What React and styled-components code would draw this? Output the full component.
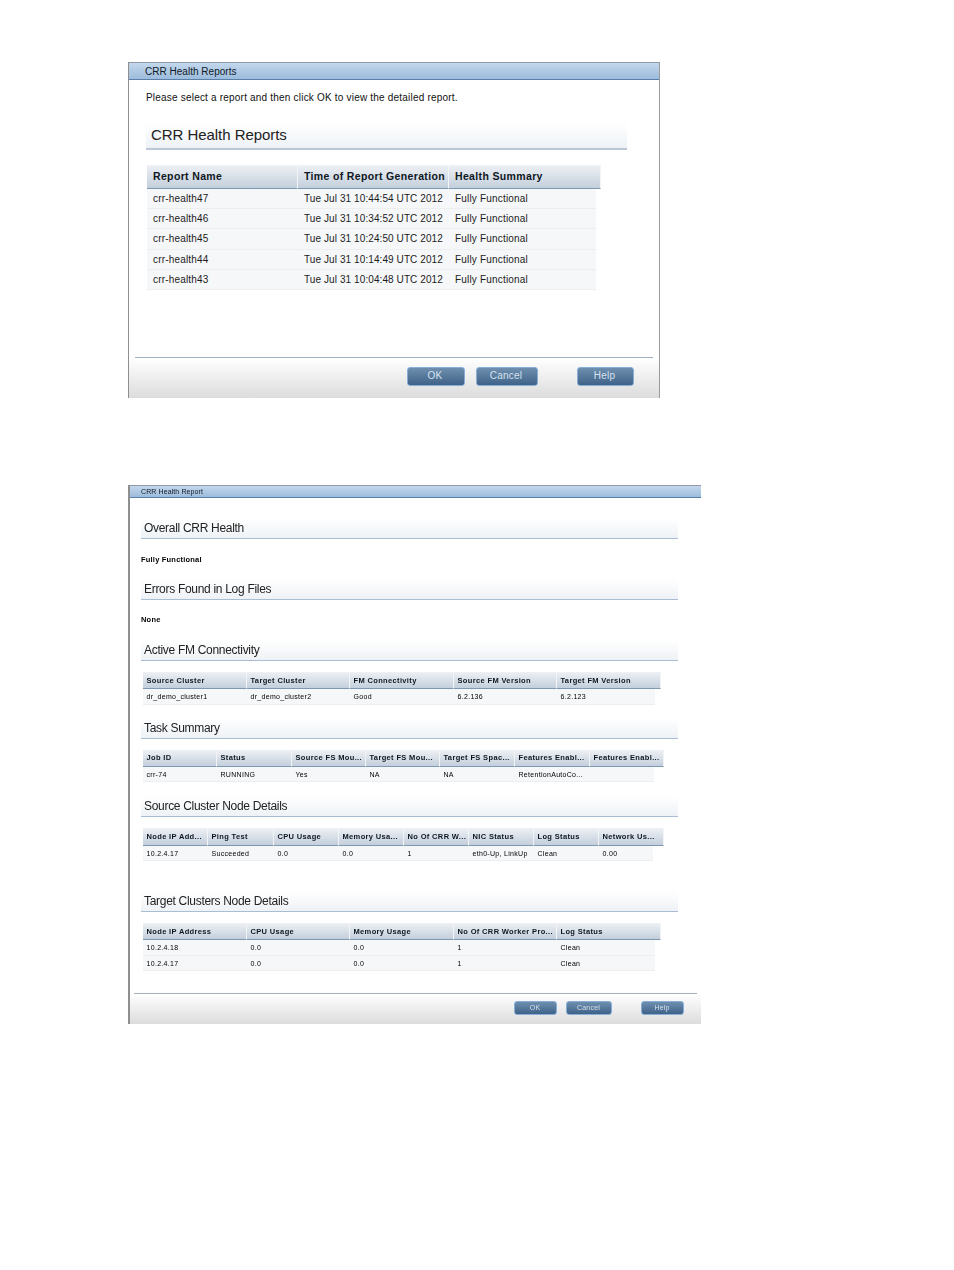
import React from "react";
import styled, { createGlobalStyle } from "styled-components";

const Global = createGlobalStyle`
  html, body { margin: 0; padding: 0; background: #fff; }
  body { font-family: "Liberation Sans", Arial, sans-serif; color: #111; }
`;

const Page = styled.div`
  width: 954px;
  height: 1270px;
  padding: 62px 0 0 128px;
  box-sizing: border-box;
  display: flex;
  flex-direction: column;
  overflow: hidden;
`;

const Dialog = styled.section`
  box-sizing: border-box;
  isolation: isolate;
  width: ${(p) => p.$width}px;
  height: ${(p) => p.$height}px;
  margin-top: ${(p) => p.$top || 0}px;
  display: flex;
  flex-direction: column;
  background: #fff;
  border-left: ${(p) => (p.$small ? 2 : 1)}px solid #8f8f8f;
  border-right: ${(p) => (p.$small ? "0" : "1px solid #9a9a9a")};
  filter: ${(p) => (p.$small ? "blur(0.3px)" : "none")};
`;

const TitleBar = styled.header`
  box-sizing: border-box;
  flex: none;
  height: ${(p) => (p.$small ? 13 : 18)}px;
  padding-left: ${(p) => (p.$small ? 11 : 16)}px;
  display: flex;
  align-items: center;
  font-size: ${(p) => (p.$small ? 7 : 10)}px;
  letter-spacing: ${(p) => (p.$small ? 0.1 : 0.02)}px;
  color: #0f1a26;
  border-top: 1px solid #8f9aa6;
  border-bottom: 1px solid #5a7fa8;
  background: linear-gradient(#c3d7ec, #9dbcdc);
`;

const Body = styled.div`
  flex: 1;
  min-height: 0;
  display: flex;
  flex-direction: column;
  padding-left: ${(p) => (p.$small ? 11 : 16)}px;
`;

const Intro = styled.p`
  margin: 11px 0 0 1px;
  font-size: 10px;
  line-height: 14px;
  letter-spacing: 0.2px;
`;

const SectionHead = styled.h2`
  box-sizing: border-box;
  margin: ${(p) => p.$top}px 0 0 ${(p) => (p.$small ? 0 : 1)}px;
  width: ${(p) => (p.$small ? 537 : 481)}px;
  height: ${(p) => (p.$small ? 21 : 27)}px;
  padding: 0 0 ${(p) => (p.$small ? 0 : 2)}px ${(p) => (p.$small ? 3 : 5)}px;
  display: flex;
  align-items: center;
  font-weight: 400;
  font-size: ${(p) => (p.$small ? 12 : 15)}px;
  letter-spacing: ${(p) => (p.$small ? -0.3 : -0.05)}px;
  color: #222;
  background: linear-gradient(#fff, #eef2f6);
  border-bottom: ${(p) => (p.$small ? "1px solid #a9bed3" : "2px solid #bcc8d5")};
`;

const Status = styled.p`
  margin: ${(p) => p.$top}px 0 0;
  height: 10px;
  font-size: 7.5px;
  line-height: 10px;
  font-weight: 700;
  letter-spacing: 0.2px;
  color: #000;
`;

const Table = styled.div`
  margin: ${(p) => p.$top}px 0 0 ${(p) => p.$left}px;
  display: flex;
  flex-direction: column;
  align-items: flex-start;
`;

const HeadRow = styled.div`
  display: grid;
  grid-template-columns: ${(p) => p.$cols};
  width: ${(p) => p.$width}px;
  height: ${(p) => p.$height}px;
`;

const HeadCell = styled.div`
  box-sizing: border-box;
  padding: 0 0 ${(p) => (p.$small ? 0 : 2)}px ${(p) => (p.$small ? 3.5 : 6)}px;
  display: flex;
  align-items: center;
  white-space: nowrap;
  overflow: hidden;
  font-weight: 700;
  font-size: ${(p) => (p.$small ? 7.5 : 10.5)}px;
  letter-spacing: ${(p) => (p.$small ? 0.35 : 0.35)}px;
  color: #0e1722;
  background: linear-gradient(#eef1f5, #c3cfdc);
  border-bottom: 1px solid #7f98b2;
  border-right: 1px solid #f2f4f6;
`;

const Row = styled.div`
  display: grid;
  grid-template-columns: ${(p) => p.$cols};
  width: ${(p) => p.$width}px;
  height: ${(p) => p.$height}px;
  background: #f6f7f9;
  border-bottom: 1px solid #eceef0;
  box-sizing: border-box;
`;

const Cell = styled.div`
  box-sizing: border-box;
  padding-left: ${(p) => (p.$small ? 3.5 : 6)}px;
  padding-top: ${(p) => (p.$small ? 1 : 0)}px;
  display: flex;
  align-items: center;
  white-space: nowrap;
  overflow: hidden;
  font-size: ${(p) => (p.$small ? 7 : 10)}px;
  letter-spacing: ${(p) => (p.$small ? 0.3 : p.$tight ? 0.09 : 0.18)}px;
  color: ${(p) => (p.$small ? "#000" : "#1c1c1c")};
`;

const Footer = styled.footer`
  flex: none;
  box-sizing: border-box;
  height: ${(p) => p.$height}px;
  margin-left: ${(p) => (p.$small ? 4 : 6)}px;
  margin-right: ${(p) => (p.$small ? 4 : 6)}px;
  position: relative;
  display: flex;
  align-items: flex-start;
  justify-content: flex-end;
  padding-top: ${(p) => (p.$small ? 7 : 9)}px;
  padding-right: ${(p) => (p.$small ? 13 : 19)}px;
  border-top: 1px solid #9fb0c0;
  &::before {
    content: "";
    position: absolute;
    z-index: -1;
    top: 0;
    bottom: 0;
    left: ${(p) => (p.$small ? -4 : -6)}px;
    right: ${(p) => (p.$small ? -4 : -6)}px;
    background: linear-gradient(#fff, #dcdcdc);
  }
`;

const Button = styled.button`
  box-sizing: border-box;
  flex: none;
  width: ${(p) => p.$w}px;
  height: ${(p) => (p.$small ? 14 : 19)}px;
  margin-left: ${(p) => p.$gap}px;
  padding: 0 ${(p) => (p.$small ? 1 : 2)}px ${(p) => (p.$small ? 1 : 2)}px 0;
  font-family: inherit;
  font-size: ${(p) => (p.$small ? 7 : 10)}px;
  letter-spacing: 0.2px;
  color: #d6e2ee;
  border: 1px solid #86aed6;
  border-radius: 3px;
  background: linear-gradient(#6e8fae, #3f6289);
`;

const reports = [
  ["crr-health47", "Tue Jul 31 10:44:54 UTC 2012"],
  ["crr-health46", "Tue Jul 31 10:34:52 UTC 2012"],
  ["crr-health45", "Tue Jul 31 10:24:50 UTC 2012"],
  ["crr-health44", "Tue Jul 31 10:14:49 UTC 2012"],
  ["crr-health43", "Tue Jul 31 10:04:48 UTC 2012"],
];

const c5 = "104px 103px 104px 103px 104px";
const tables = [
  {
    title: "Active FM Connectivity", top: 15, cols: c5, width: 518, rowW: 512, tTop: 11, hh: 17, rh: 15.5,
    head: ["Source Cluster", "Target Cluster", "FM Connectivity", "Source FM Version", "Target FM Version"],
    rows: [["dr_demo_cluster1", "dr_demo_cluster2", "Good", "6.2.136", "6.2.123"]],
  },
  {
    title: "Task Summary", top: 13, cols: "74px 75px 74px 74px 75px 75px 74px", width: 520, rowW: 511, tTop: 11, hh: 17, rh: 15.5,
    head: ["Job ID", "Status", "Source FS Mou...", "Target FS Mou...", "Target FS Spac...", "Features Enabl...", "Features Enabl..."],
    rows: [["crr-74", "RUNNING", "Yes", "NA", "NA", "RetentionAutoCo...", ""]],
  },
  {
    title: "Source Cluster Node Details", top: 14, cols: "65px 66px 65px 65px 65px 65px 65px 65px", width: 520, rowW: 510, tTop: 11, hh: 18, rh: 15,
    head: ["Node IP Add...", "Ping Test", "CPU Usage", "Memory Usa...", "No Of CRR W...", "NIC Status", "Log Status", "Network Us..."],
    rows: [["10.2.4.17", "Succeeded", "0.0", "0.0", "1", "eth0-Up, LinkUp", "Clean", "0.00"]],
  },
  {
    title: "Target Clusters Node Details", top: 30, cols: c5, width: 518, rowW: 512, tTop: 11, hh: 17, rh: 15.5,
    head: ["Node IP Address", "CPU Usage", "Memory Usage", "No Of CRR Worker Pro...", "Log Status"],
    rows: [["10.2.4.18", "0.0", "0.0", "1", "Clean"], ["10.2.4.17", "0.0", "0.0", "1", "Clean"]],
  },
];

export default function App() {
  return (
    <Page>
      <Global />
      <Dialog $width={532} $height={336}>
        <TitleBar>CRR Health Reports</TitleBar>
        <Body>
          <Intro>Please select a report and then click OK to view the detailed report.</Intro>
          <SectionHead $top={18}>CRR Health Reports</SectionHead>
          <Table $top={15} $left={2}>
            <HeadRow $cols="151px 151px 152px" $width={454} $height={24}>
              <HeadCell>Report Name</HeadCell>
              <HeadCell>Time of Report Generation</HeadCell>
              <HeadCell>Health Summary</HeadCell>
            </HeadRow>
            {reports.map(([name, time]) => (
              <Row key={name} $cols="151px 151px 147px" $width={449} $height={20.2}>
                <Cell>{name}</Cell>
                <Cell $tight>{time}</Cell>
                <Cell>Fully Functional</Cell>
              </Row>
            ))}
          </Table>
        </Body>
        <Footer $height={41}>
          <Button $w={58} $gap={0}>OK</Button>
          <Button $w={62} $gap={11}>Cancel</Button>
          <Button $w={57} $gap={39}>Help</Button>
        </Footer>
      </Dialog>

      <Dialog $small $width={573} $height={539} $top={87}>
        <TitleBar $small>CRR Health Report</TitleBar>
        <Body $small>
          <SectionHead $small $top={20}>Overall CRR Health</SectionHead>
          <Status $top={16}>Fully Functional</Status>
          <SectionHead $small $top={14}>Errors Found in Log Files</SectionHead>
          <Status $top={15}>None</Status>
          {tables.map((t) => (
            <React.Fragment key={t.title}>
              <SectionHead $small $top={t.top}>{t.title}</SectionHead>
              <Table $top={t.tTop} $left={2}>
                <HeadRow $cols={t.cols} $width={t.width} $height={t.hh}>
                  {t.head.map((h, i) => <HeadCell $small key={i}>{h}</HeadCell>)}
                </HeadRow>
                {t.rows.map((r, i) => (
                  <Row key={i} $cols={t.cols} $width={t.rowW} $height={t.rh}>
                    {r.map((v, j) => <Cell $small key={j}>{v}</Cell>)}
                  </Row>
                ))}
              </Table>
            </React.Fragment>
          ))}
        </Body>
        <Footer $small $height={31}>
          <Button $small $w={43} $gap={0}>OK</Button>
          <Button $small $w={46} $gap={9}>Cancel</Button>
          <Button $small $w={43} $gap={29}>Help</Button>
        </Footer>
      </Dialog>
    </Page>
  );
}
